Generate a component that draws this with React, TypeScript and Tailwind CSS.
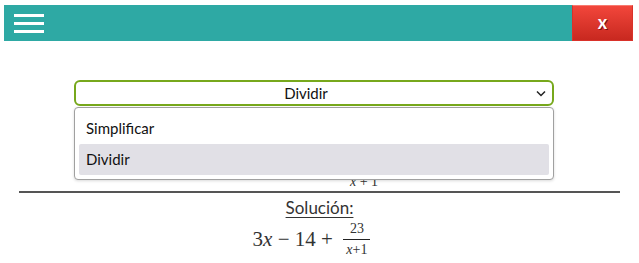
import React from "react";

const mathFont = { fontFamily: '"Liberation Serif", "DejaVu Serif", serif' };

function Fraction({ num, den, className = "" }: { num: React.ReactNode; den: React.ReactNode; className?: string }) {
  return (
    <span className={`inline-flex flex-col items-center align-middle leading-none ${className}`}>
      <span className="px-[3px] pb-[3px] text-[14px]">{num}</span>
      <span className="w-full border-t border-[#222] px-[3px] pt-[3px] text-[14px]">{den}</span>
    </span>
  );
}

export default function App() {
  return (
    <div className="w-[639px] h-[263px] bg-white overflow-hidden" style={{ fontFamily: '"Lato", "Open Sans", sans-serif' }}>
      <header className="ml-[4px] mt-[5px] w-[629px] h-[36px] bg-[#2ea9a4] flex items-center justify-between">
        <button className="ml-[10px] w-[30px] flex flex-col gap-[5px]">
          <span className="block h-[3px] bg-white" />
          <span className="block h-[3px] bg-white" />
          <span className="block h-[3px] bg-white" />
        </button>
        <button className="h-full w-[61px] border border-[#d9322a] border-t-[#f77a70] bg-gradient-to-b from-[#f2463b] to-[#c8281f] text-white font-bold text-[18px] leading-none pb-[2px] [text-shadow:1px_1px_0_#7a1010]">
          x
        </button>
      </header>

      <div className="relative mt-[39px]">
        <div className="ml-[74px] w-[480px] h-[26px] rounded-[6px] border-2 border-[#77a81c] flex items-center justify-center relative text-[15px] text-[#111]">
          <span className="-ml-[16px]">Dividir</span>
          <svg className="absolute right-[6px] top-[8px]" width="10" height="7" viewBox="0 0 10 7">
            <path d="M1 1.5 L5 5.5 L9 1.5" fill="none" stroke="#222" strokeWidth="1.5" />
          </svg>
        </div>

        <div className="relative">
          <div className="flex justify-center pt-[48px] pl-[136px] text-[#333] text-[19px]" style={mathFont}>
            <Fraction num={<span>3<i>x</i><sup>2</sup> − 11<i>x</i> + 9</span>} den={<span><i>x</i> + 1</span>} />
          </div>

          <div className="absolute left-[74px] top-[1px] z-10 w-[480px] rounded-[4px] border border-[#a0a0a0] bg-white shadow-[0_1px_3px_rgba(0,0,0,0.15)] p-[4px] text-[15px] text-[#111]">
            <div className="h-[32px] flex items-center pl-[7px]">Simplificar</div>
            <div className="h-[31px] flex items-center pl-[7px] bg-[#e1e0e6] rounded-[2px]">Dividir</div>
          </div>
        </div>

        <hr className="mx-[19px] mt-[2px] border-t-2 border-[#555]" />

        <div className="flex flex-col items-center mt-[5px]">
          <span className="text-[17px] text-[#333] underline underline-offset-[3px] leading-[20px]">Solución:</span>
          <div className="flex items-center text-[21px] text-[#333] leading-none mt-[4px] ml-[-16px]" style={mathFont}>
            <span>3<i>x</i> − 14 +&nbsp;&nbsp;</span>
            <Fraction num="23" den={<span><i>x</i>+1</span>} />
          </div>
        </div>
      </div>
    </div>
  );
}
